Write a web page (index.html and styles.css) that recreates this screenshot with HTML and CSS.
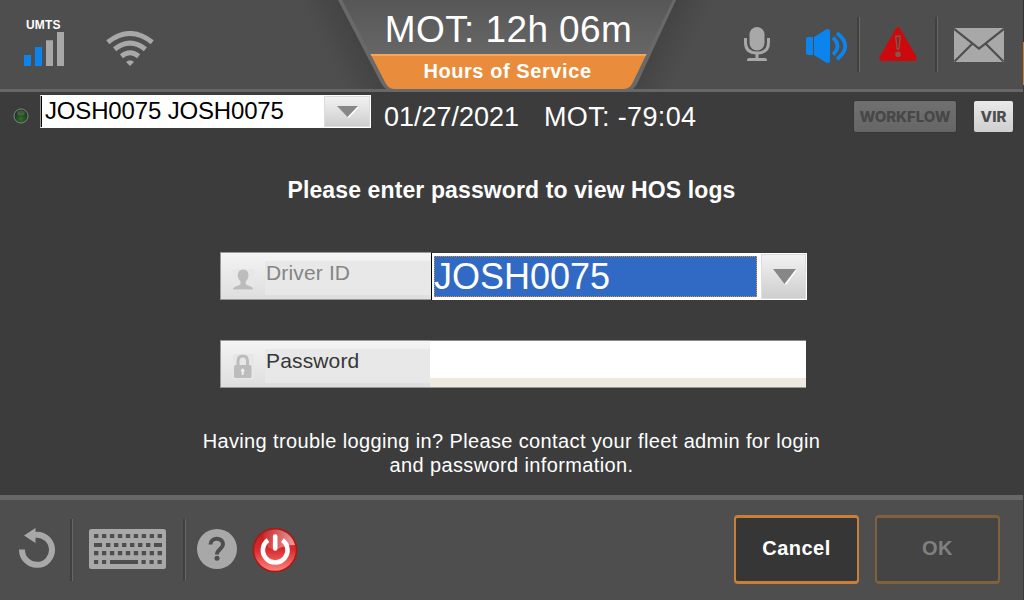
FILE: index.html
```html
<!DOCTYPE html>
<html lang="en">
<head>
<meta charset="utf-8">
<title>Hours of Service</title>
<link rel="stylesheet" href="styles.css">
</head>
<body>
<div class="screen">
  <header class="topbar">
    <div class="network">
      <div class="cell">
        <span class="cell-label">UMTS</span>
        <svg class="bars" width="40" height="34" viewBox="0 0 40 34"><path fill="#0b84ee" d="M0 23h7v11H0zM11 15h7v19h-7z"/><path fill="#a8a8a8" d="M22 8.300h7V34h-7zM33 0h7v34h-7z"/></svg>
      </div>
      <svg class="wifi" width="48" height="35" viewBox="0 0 48 35"><g fill="none" stroke="#a8a8a8" stroke-width="5"><path d="M1.800 11.200Q24-6.200 46.200 11.200"/><path d="M8.600 18.200Q24 6 39.400 18.200"/><path d="M15.400 25.200Q24 18.300 32.600 25.200"/></g><path fill="#a8a8a8" d="M20 31q4-3.500 8 0l-4 4z"/></svg>
    </div>
    <div class="tab">
      <svg class="tab-shape" width="360" height="92" viewBox="330 0 360 92">
        <defs>
          <linearGradient id="tabfill" x2="0" y2="1"><stop offset="0" stop-color="#575757"/><stop offset="1" stop-color="#666"/></linearGradient>
          <linearGradient id="shadeleft" gradientUnits="userSpaceOnUse" x1="360" y1="45" x2="330" y2="60"><stop stop-color="#444"/><stop offset="1" stop-color="#444" stop-opacity="0"/></linearGradient>
          <linearGradient id="shaderight" gradientUnits="userSpaceOnUse" x1="654" y1="45" x2="684" y2="60"><stop stop-color="#444"/><stop offset="1" stop-color="#444" stop-opacity="0"/></linearGradient>
        </defs>
        <path fill="url(#shadeleft)" d="M290 0H345L390 89H290z"/>
        <path fill="url(#shaderight)" d="M670 0H724V89H625z"/>
        <path fill="#696969" d="M338 0H676L638 82Q634 92 624 92H395Q386 92 381 83z"/>
        <path fill="url(#tabfill)" d="M342 0H673L646.500 54H370.500z"/>
        <path fill="#e98d3c" d="M370.500 54H646.500L632.500 83Q629.500 89 623 89H395Q388.500 89 385.500 83z"/>
        <path fill="#f6a65c" d="M370.500 54H646.500L645.600 56H371.500z"/>
      </svg>
      <div class="tab-time">MOT: 12h 06m</div>
      <div class="tab-title">Hours of Service</div>
    </div>
    <div class="status">
      <svg class="mic" width="26" height="34" viewBox="0 0 26 34"><rect x="5.500" width="15" height="23.500" rx="7.500" fill="#a8a8a8"/><path d="M1.500 11v4.500Q1.500 26 13 26T24.500 15.500V11" fill="none" stroke="#a8a8a8" stroke-width="3"/><path fill="#a8a8a8" d="M11.500 26h3v5H21q2 0 2 3H3q0-3 2-3h6.500z"/></svg>
      <svg class="speaker" width="42" height="34" viewBox="0 0 42 34"><path fill="#0b84ee" d="M2 8h5v18H2Q0 26 0 24V10Q0 8 2 8zM8 8L20 .5Q24-1 24 2V32Q24 35 20 33.500L8 26z"/><g fill="none" stroke="#0b84ee" stroke-width="3.800"><path d="M27 8.500Q36 17 27 25.500"/><path d="M31 4Q47.500 17 31 30.300"/></g></svg>
      <i class="rule"></i>
      <svg class="alert" width="38" height="34" viewBox="0 0 38 34"><path fill="#cc0a0d" d="M17 1.200Q19-1 21 1.200L37.300 29.500Q39 34 35 34H3Q-1 34 .7 29.500z"/><g fill="#85564e"><path d="M16 8.500h6l-1.500 14h-3z"/><circle cx="19" cy="27.300" r="2.800"/></g><path fill="#a31d1a" d="M17.500 10h3l-1 11h-1z"/></svg>
      <i class="rule"></i>
      <svg class="mail" width="50" height="34" viewBox="0 0 50 34"><path fill="#a8a8a8" d="M0 0H50V34H0z"/><path d="M0 .8L25 20.500 50 .8M.5 33.500L18.500 15.500M49.500 33.500L31.500 15.500" fill="none" stroke="#4e4e4e" stroke-width="2.200"/></svg>
    </div>
  </header>

  <div class="driverbar">
    <svg class="led" width="16" height="16" viewBox="0 0 16 16"><defs><radialGradient id="ledfill" cy=".7"><stop stop-color="#2e6e25"/><stop offset="1" stop-color="#1d381d"/></radialGradient></defs><circle cx="8" cy="8" r="7" fill="url(#ledfill)" stroke="#8b8b91" stroke-width=".9"/><ellipse cx="8" cy="5" rx="4" ry="2.500" fill="#557255" opacity=".6"/></svg>
    <div class="driver-select"><span class="driver-name">JOSH0075 JOSH0075</span><span class="drop small"><svg width="22" height="12" viewBox="0 0 22 12"><path fill="#fff" d="M1 1h21L12 12z"/><path fill="#878787" d="M0 0h21L10.500 11z"/></svg></span></div>
    <span class="date">01/27/2021</span>
    <span class="mot">MOT: -79:04</span>
    <span class="chip workflow">WORKFLOW</span>
    <span class="chip vir">VIR</span>
  </div>

  <main class="login">
    <h1 class="prompt">Please enter password to view HOS logs</h1>
    <div class="field id-field">
      <div class="label muted">
        <svg class="field-icon" width="21" height="21" viewBox="0 0 21 21"><path fill="#e7e7e7" d="M0 0h21v21H0z"/><path fill="#bcbcbc" d="M10.200.5c7 0 6.200 9 2.600 12v2.500c0 1.500 7.500 2 7.500 5.500H0c0-3.500 7.500-4 7.500-5.500v-2.500c-3.600-3-4.400-12 2.700-12z"/></svg>
        <span class="label-text">Driver ID</span>
      </div>
      <div class="id-select"><span class="id-value">JOSH0075</span><span class="drop"><svg width="24" height="16" viewBox="0 0 24 16"><path fill="#fff" d="M1 1h23L13 16z"/><path fill="#878787" d="M0 0h23L11.500 15z"/></svg></span></div>
    </div>
    <div class="field pw-field">
      <div class="label">
        <svg class="field-icon" width="21" height="25" viewBox="0 0 21 25"><path fill="#e7e7e7" d="M0 0h21v25H0z"/><path fill="none" stroke="#bcbcbc" stroke-width="3" d="M5 12V7Q5 2 9.700 2T14.500 7v5"/><rect x="1" y="11" width="17.500" height="13" rx="1.500" fill="#bcbcbc"/><path fill="#eee" d="M9.700 14.500a2 2 0 0 1 1 3.600V21h-2v-2.900a2 2 0 0 1 1-3.600z"/></svg>
        <span class="label-text">Password</span>
      </div>
      <div class="pw-input"></div>
    </div>
    <p class="help">Having trouble logging in? Please contact your fleet admin for login<br>and password information.</p>
  </main>

  <footer class="bottombar">
    <svg class="undo" width="37" height="40" viewBox="0 0 37 40"><path fill="none" stroke="#a8a8a8" stroke-width="6" d="M3 21.500A15 15 0 1 0 16 7"/><path fill="#a8a8a8" d="M5 7.500L16.500 0V15z"/></svg>
    <i class="rule"></i>
    <svg class="keyboard" width="77" height="40" viewBox="0 0 77 40"><rect width="77" height="40" rx="2.500" fill="#a8a8a8"/><g fill="none" stroke="#4e4e4e" stroke-width="4.200"><path d="M5 7h68" stroke-dasharray="4.400 3.550"/><path d="M5 16h8M65 16h8"/><path d="M17 16h46" stroke-dasharray="4.400 3.600"/><path d="M5 24.200h68" stroke-dasharray="4.400 3.550"/><path d="M5 33h4.200M13 33h4.200M21 33h28M52.500 33h4.200M60.500 33h4.200M68.500 33h4.200"/></g></svg>
    <i class="rule"></i>
    <svg class="question" width="40" height="40" viewBox="0 0 40 40"><circle cx="20" cy="20" r="20" fill="#a8a8a8"/><path fill="none" stroke="#4e4e4e" stroke-width="4" d="M13.500 15.500C13.500 8 26 8 26 15.200c0 4.800-6 4.800-6 10.300"/><circle cx="20" cy="29.300" r="2.500" fill="#4e4e4e"/></svg>
    <svg class="power" width="46" height="46" viewBox="0 0 46 46"><defs><linearGradient id="redfill" x2="0" y2="1"><stop offset="0" stop-color="#bc1c1f"/><stop offset=".5" stop-color="#d92c2e"/><stop offset="1" stop-color="#ff8480"/></linearGradient><linearGradient id="gloss" x2="1"><stop stop-color="#fff" stop-opacity=".05"/><stop offset="1" stop-color="#fff" stop-opacity=".55"/></linearGradient></defs><circle cx="23" cy="23" r="21.500" fill="url(#redfill)" stroke="#b01610" stroke-width="1.500"/><path d="M11 6.500A20.500 20.500 0 0 1 43 18Q32 18 24 23 12 22 11 6.500z" fill="url(#gloss)"/><path d="M16 13.200A12.300 12.300 0 1 0 30.400 13.200" fill="none" stroke="#fff" stroke-width="4.600"/><path d="M23.200 9.500V21.500" stroke="#fff" stroke-width="4.600" stroke-linecap="round"/></svg>
    <button class="btn cancel">Cancel</button>
    <button class="btn ok">OK</button>
  </footer>
  <div class="edge"></div>
</div>
</body>
</html>
```

FILE: styles.css
```css
* { box-sizing: border-box; }
body { margin: 0; background: #3c3c3c; font-family: "Liberation Sans", Arial, sans-serif; color: #fff; }
svg { display: block; flex: none; }
.screen { position: relative; width: 1024px; height: 600px; display: flex; flex-direction: column; overflow: hidden; white-space: nowrap; }

.topbar { flex: none; height: 92px; display: grid; grid-template-columns: 330px 360px 334px; background: linear-gradient(#4e4e4e 0 89px, #676767 89px); }
.network { display: flex; align-items: flex-start; padding: 19px 0 0 24px; }
.cell-label { display: block; height: 13px; padding-left: 2px; font: bold 12px/13px "Liberation Sans", sans-serif; letter-spacing: .2px; }
.cell { width: 82px; }
.wifi { margin-top: 12px; }
.tab { position: relative; text-align: center; }
.tab-shape { position: absolute; left: 0; top: 0; overflow: visible; }
.tab-time { position: relative; height: 54px; padding: 9px 3px 0 0; font-size: 37px; line-height: 42px; letter-spacing: .4px; }
.tab-title { position: relative; padding-right: 5px; font-size: 20px; font-weight: bold; line-height: 34px; letter-spacing: .58px; }
.status { position: relative; display: flex; align-items: flex-start; padding: 17px 0 0 54px; }
.rule { flex: none; width: 3px; height: 55px; border-left: 2px solid #404040; border-right: 1px solid #666; }
.mic { margin: 10px 36px 0 0; }
.speaker { margin: 12px 9px 0 0; }
.alert { margin: 10px 18px 0 19px; }
.mail { margin: 11px 0 0 16px; }

.driverbar { flex: none; height: 48px; display: flex; align-items: flex-start; padding: 3px 0 0 13px; }
.led { margin: 13px 11px 0 0; }
.driver-select { width: 331px; height: 33px; display: flex; background: #fff; border: 1px solid #fff; border-left-color: #999; box-shadow: inset 1px 0 #000; color: #000; font-size: 24px; line-height: 30px; }
.driver-name { width: 283px; padding-left: 4px; letter-spacing: -.16px; }
.drop { display: flex; align-items: center; justify-content: center; background: linear-gradient(#f2f2f2, #cecece); border: 1px solid #dcdcdc; }
.drop.small { width: 46px; height: 31px; padding-left: 2px; }
.date, .mot { font-size: 27px; line-height: 44px; }
.date { width: 160px; margin-left: 13px; }
.mot { width: 310px; letter-spacing: .35px; }
.chip { height: 31px; margin-top: 6px; border-radius: 2px; text-align: center; font: 800 15px/31px Inter, sans-serif; }
.workflow { width: 102px; background: linear-gradient(#707070, #666); color: #474747; box-shadow: 0 0 0 .5px #333; letter-spacing: -.1px; }
.vir { width: 39px; margin-left: 18px; background: linear-gradient(#e9e9e9, #cfcfcf); color: #4d4d4d; }

.login { flex: 1; display: flex; flex-direction: column; align-items: flex-start; padding-left: 220px; }
.prompt { width: 583px; margin: 35px 0 0; text-align: center; font-size: 23px; line-height: 30px; letter-spacing: .12px; }
.field { display: flex; width: 587px; height: 48px; }
.id-field { margin-top: 47px; }
.pw-field { margin-top: 40px; }
.label { width: 210px; display: flex; border: 1px solid #999; border-width: 1px 0 1px 1px; background: linear-gradient(#f4f4f4, #dedede); color: #373737; }
.label.muted { width: 211px; color: #858585; }
.field-icon { margin: 16px 0 0 12px; }
.pw-field .field-icon { margin-top: 13px; }
.label-text { flex: 1; height: 34px; margin: 8px 0 0 11px; padding-left: 1px; background: #e8e8e8; font-size: 21px; line-height: 24px; letter-spacing: .15px; }
.id-select { width: 376px; height: 47px; margin-top: 1px; display: flex; background: #fff; box-shadow: inset 1px 0 #000; padding: 3px 1px 3px 3px; }
.id-value { width: 323px; border: 1px dotted #d59325; background: #316ac5; font-size: 36px; line-height: 40px; text-indent: -1px; }
.id-select .drop { width: 45px; height: 45px; margin: -2px 0 0 4px; padding-left: 2px; }
.pw-input { width: 376px; background: linear-gradient(#888 0 1px, #fff 1px 38px, #eeeade 38px 47px, #999 47px); }
.help { width: 623px; margin: 41px 0 0 -20px; text-align: center; font-size: 20px; line-height: 24px; letter-spacing: .37px; }

.bottombar { flex: none; height: 105px; display: flex; align-items: flex-start; padding: 24px 0 0 19px; background: linear-gradient(#676767 0 5px, #4e4e4e 5px); }
.bottombar .rule { height: 62px; }
.undo { margin: 9px 14px 0 0; }
.keyboard { margin: 10px 17px 0 16px; }
.question { margin: 10px 0 0 11px; }
.power { margin: 8px 436px 0 15px; }
.btn { width: 125px; height: 69px; margin: -4px 0 0; padding: 0 0 2px; border-radius: 4px; border: 2px solid #c87f3a; border-width: 3px 2px; background: #363636; color: #fff; font: bold 20px "Liberation Sans", sans-serif; letter-spacing: .5px; }
.ok { margin-left: 16px; background: #444; border-color: #7f603f; color: #808080; }
.edge { position: absolute; right: 0; top: 0; width: 1px; height: 600px; background: linear-gradient(#333 0 42px, #c87f3a 42px 85px, #3c3c3c 85px); }
```
